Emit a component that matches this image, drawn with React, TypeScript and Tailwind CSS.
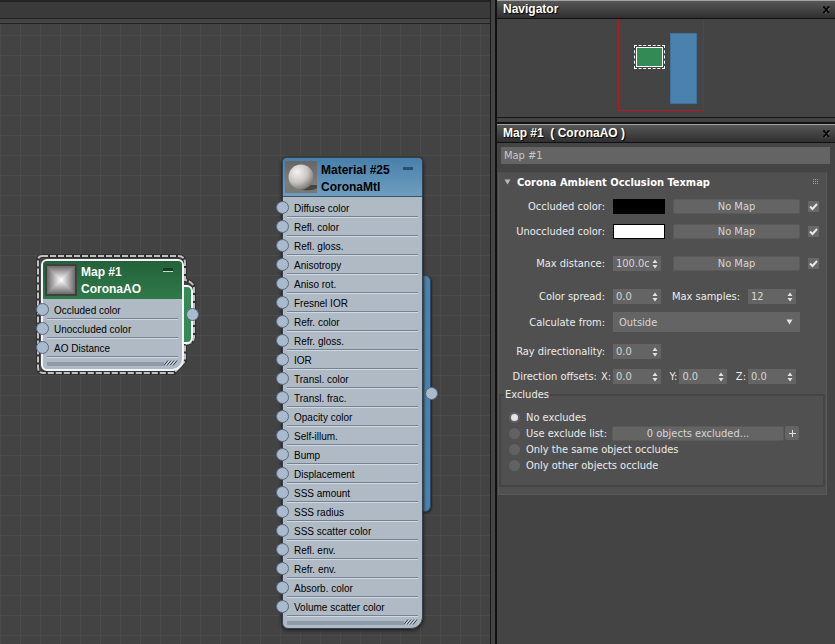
import { Fragment, useId } from "react";
import type { ReactNode } from "react";

const materialSlots = [
  "Diffuse color",
  "Refl. color",
  "Refl. gloss.",
  "Anisotropy",
  "Aniso rot.",
  "Fresnel IOR",
  "Refr. color",
  "Refr. gloss.",
  "IOR",
  "Transl. color",
  "Transl. frac.",
  "Opacity color",
  "Self-illum.",
  "Bump",
  "Displacement",
  "SSS amount",
  "SSS radius",
  "SSS scatter color",
  "Refl. env.",
  "Refr. env.",
  "Absorb. color",
  "Volume scatter color",
];

const aoSlots = ["Occluded color", "Unoccluded color", "AO Distance"];

function Port({ className }: { className: string }) {
  return (
    <span
      className={`absolute size-[13px] rounded-full border border-[#56687c] bg-[#a9bace] ${className}`}
    />
  );
}

function SlotList({ slots }: { slots: string[] }) {
  return (
    <ul>
      {slots.map((slot) => (
        <li key={slot} className="relative h-[19px] pr-1 pl-1">
          <Port className="top-1 -left-[7px]" />
          <div className="h-5 border-b border-[#76828f] pl-[7px] text-[10px] leading-6 shadow-[0_1px_0_#cdd9e4]">
            {slot}
          </div>
        </li>
      ))}
    </ul>
  );
}

function NodeFooter() {
  return (
    <div className="flex h-[13px] items-center px-1">
      <div className="mt-[2px] h-1 flex-1 bg-[#8e9bab]" />
      <svg width="14" height="6" viewBox="0 0 14 6" aria-hidden="true">
        <path d="M0 5.500 4 .5M3 5.500 7 .5M6 5.500 10 .5M9 5.500 13 .5" stroke="#303840" fill="none" />
        <path d="M1.500 5.500 5.500 .5M4.500 5.500 8.500 .5M7.500 5.500 11.500 .5" stroke="#e8eef4" strokeWidth=".7" fill="none" />
      </svg>
    </div>
  );
}

function SphereThumb() {
  return (
    <svg className="size-8 shrink-0" viewBox="0 0 32 32" aria-hidden="true">
      <defs>
        <linearGradient id="sphereBack" x1="0" y1="0" x2="0" y2="1">
          <stop offset="0" stopColor="#666666" />
          <stop offset=".65" stopColor="#7c7c7a" />
          <stop offset="1" stopColor="#777777" />
        </linearGradient>
        <radialGradient id="sphereFill" cx=".35" cy=".3" r=".75">
          <stop offset="0" stopColor="#f4f2ef" />
          <stop offset=".55" stopColor="#c9c6c2" />
          <stop offset="1" stopColor="#77726e" />
        </radialGradient>
      </defs>
      <rect width="32" height="32" fill="url(#sphereBack)" />
      <path d="M14 27C20 31 30 29 32 27V24L26 24Z" fill="#454545" />
      <circle cx="16" cy="16" r="12.500" fill="url(#sphereFill)" />
    </svg>
  );
}

function AoThumb() {
  return (
    <svg className="size-8 shrink-0" viewBox="0 0 32 32" aria-hidden="true">
      <defs>
        <linearGradient id="aoX">
          <stop offset="0" stopColor="#6c6868" />
          <stop offset=".5" stopColor="#ffffff" />
          <stop offset="1" stopColor="#6c6868" />
        </linearGradient>
        <linearGradient id="aoY" x1="0" y1="0" x2="0" y2="1">
          <stop offset="0" stopColor="#6c6868" />
          <stop offset=".5" stopColor="#ffffff" />
          <stop offset="1" stopColor="#6c6868" />
        </linearGradient>
      </defs>
      <rect width="32" height="32" fill="#3c4240" />
      <rect x="2" y="2" width="28" height="28" fill="url(#aoX)" />
      <path d="M2 2H30L16 16ZM2 30H30L16 16Z" fill="url(#aoY)" />
    </svg>
  );
}

function AoNode() {
  return (
    <section className="absolute top-[235px] left-[41px] w-[143px] text-black">
      <svg
        className="absolute -top-[6px] -left-[6px]"
        width="162"
        height="124"
        viewBox="0 0 162 124"
        fill="none"
        aria-hidden="true"
      >
        <path
          d="M7 3H143Q150 3 150 10V27Q159 29 159 36V84Q159 90 150 91V108L139 120H8Q3 120 3 114V8Q3 3 7 3Z"
          stroke="#303030"
          strokeWidth="4"
        />
        <path
          d="M7 3H143Q150 3 150 10V27Q159 29 159 36V84Q159 90 150 91V108L139 120H8Q3 120 3 114V8Q3 3 7 3Z"
          stroke="#c0c0c0"
          strokeWidth="2"
          strokeDasharray="6 2"
        />
      </svg>
      <div className="absolute top-[26px] -right-[9px] h-[59px] w-3 rounded-r-md border-2 border-white bg-[#348a55]" />
      <Port className="top-[49px] -right-[15px]" />
      <div className="relative rounded-md rounded-br-xl border-2 border-[#f2f5f8] bg-[#afbac5]">
        <header className="flex h-[38px] items-center gap-1 rounded-t bg-linear-to-b from-[#24613a] to-[#2f7a4a] pr-[3px] pl-[2px] text-white">
          <AoThumb />
          <h2 className="flex-1 pt-px text-xs leading-[17px] font-bold">
            Map #1
            <br />
            CoronaAO
          </h2>
          <button aria-label="Collapse Map #1" className="mr-[6px] mb-5 h-1 w-[10px] border-b border-[#c4dccb] bg-[#173e26]" />
        </header>
        <SlotList slots={aoSlots} />
        <NodeFooter />
      </div>
    </section>
  );
}

function MaterialNode() {
  return (
    <section className="absolute top-[133px] left-[282px] w-[141px] text-black">
      <div className="absolute top-[118px] -right-2 h-[237px] w-3 rounded-r-md border border-[#2c4a63] bg-[#4a82ad] shadow-[1px_1px_2px_#222]" />
      <Port className="top-[230px] -right-[15px]" />
      <div className="relative rounded-md rounded-br-xl border border-[#34414d] bg-[#afbac5] shadow-[0_1px_3px_1px_#252525]">
        <header className="flex h-[39px] items-center gap-1 rounded-t border-b border-[#3d566a] bg-linear-to-b from-[#4780aa] to-[#6f9dbf] pr-[3px] pl-[2px]">
          <SphereThumb />
          <h2 className="flex-1 pt-1 text-xs leading-[17px] font-bold whitespace-nowrap">
            Material #25
            <br />
            CoronaMtl
          </h2>
          <button aria-label="Collapse Material #25" className="mr-[6px] mb-[17px] h-[3px] w-[10px] bg-[#28506e]" />
        </header>
        <SlotList slots={materialSlots} />
        <NodeFooter />
      </div>
    </section>
  );
}

function PanelTitle({ children, name }: { children: ReactNode; name: string }) {
  return (
    <header className="flex h-[19px] items-center justify-between border-t border-b border-t-[#a0a5a2] border-b-[#111] bg-linear-to-b from-[#575757] to-[#303030] pr-1 pl-[6px]">
      <h2 className="pb-px font-['Liberation_Sans',Arial,sans-serif] text-xs leading-4 font-bold whitespace-pre text-white [text-shadow:1px_1px_1px_#000]">
        {children}
      </h2>
      <button aria-label={`Close ${name}`} className="size-[9px]">
        <svg width="9" height="9" viewBox="0 0 9 9" fill="none" aria-hidden="true">
          <path d="M2.500 3 7.500 8.500M7.500 3 2.500 8.500" stroke="#666" strokeWidth="1.500" />
          <path d="M2 2 6.500 7.500M6.500 2 2 7.500M1 2H3M5.500 2H7.500M1 7.500H3M5.500 7.500H7.500" stroke="#000" strokeWidth="1.600" />
        </svg>
      </button>
    </header>
  );
}

function Spinner({ label, value, id }: { label?: string; value: string; id: string }) {
  return (
    <div className="flex h-[15px] w-12 shrink-0 items-center bg-[#646464]">
      <input
        id={id}
        aria-label={label}
        defaultValue={value}
        className="h-[15px] w-9 min-w-0 bg-transparent pl-[3px] text-[11px] leading-[15px] text-[#d6d6d6] outline-none"
      />
      <svg className="ml-[3px]" width="6" height="10" viewBox="0 0 6 10" aria-hidden="true">
        <path d="M3 .5 5.500 4H.5ZM3 9.500 5.500 6H.5Z" fill="#e2e2e2" />
      </svg>
    </div>
  );
}

function MapButton() {
  return (
    <button className="h-[15px] flex-1 rounded-xs border border-[#5a5a5a] bg-[#646464] text-[11px] leading-[13px] text-[#d6d6d6]">
      No Map
    </button>
  );
}

function MapToggle({ label }: { label: string }) {
  return (
    <span className="grid size-[11px] shrink-0 items-center">
      <input
        type="checkbox"
        defaultChecked
        aria-label={label}
        className="peer col-start-1 row-start-1 size-[11px] appearance-none bg-[#686868]"
      />
      <svg
        className="pointer-events-none invisible col-start-1 row-start-1 peer-checked:visible"
        width="11"
        height="11"
        viewBox="0 0 11 11"
        fill="none"
        aria-hidden="true"
      >
        <path d="M2 5.500 4.500 8 9 3" stroke="#e8e8e8" strokeWidth="2" />
      </svg>
    </span>
  );
}

const rowLabel = "w-[106px] shrink-0 text-right whitespace-nowrap";

function Row({ children }: { children: ReactNode }) {
  return <div className="flex items-center gap-2 pr-[7px]">{children}</div>;
}

function Excludes() {
  const name = useId();
  const options = [
    "No excludes",
    "Use exclude list:",
    "Only the same object occludes",
    "Only other objects occlude",
  ];
  return (
    <fieldset className="mr-px mt-1 border-2 border-[#444] pr-6 pb-3 pl-2">
      <legend className="-ml-[5px] h-[14px] px-px leading-[14px]">Excludes</legend>
      <div className="flex flex-col pt-[7px]">
        {options.map((option, index) => (
          <div key={option} className="flex h-4 items-center">
            <label className="flex items-center gap-[6px] whitespace-nowrap">
              <input
                type="radio"
                name={name}
                defaultChecked={index === 0}
                className="size-[11px] appearance-none rounded-full border-2 border-[#626262] bg-[#626262] checked:bg-[#e4e4e4]"
              />
              {option}
            </label>
            {index === 1 && (
              <Fragment>
                <button className="ml-auto h-[15px] w-[172px] rounded-xs border border-[#5a5a5a] bg-[#646464] leading-[13px] text-[#d6d6d6]">
                  0 objects excluded...
                </button>
                <button
                  aria-label="Add excluded object"
                  className="ml-px grid size-[14px] place-items-center rounded-xs bg-[#646464] text-[#e0e0e0]"
                >
                  <svg width="7" height="7" viewBox="0 0 7 7" aria-hidden="true">
                    <path d="M3 0h1v3h3v1H4v3H3V4H0V3h3Z" fill="currentColor" />
                  </svg>
                </button>
              </Fragment>
            )}
          </div>
        ))}
      </div>
    </fieldset>
  );
}

function Rollout() {
  return (
    <section className="mt-2 mr-2 ml-px border border-[#5a5a5a] border-t-[#4c4c4c] bg-[#505050] pb-[7px] text-[11px] leading-[15px] text-[#ececec]">
      <header className="flex h-[18px] items-center pr-[7px] pl-[5px]">
        <svg width="7" height="6" viewBox="0 0 7 6" aria-hidden="true">
          <path d="M.5 .5H6.500L3.500 5.500Z" fill="#b8b8b8" />
        </svg>
        <h3 className="ml-[6px] flex-1 font-bold text-white">Corona Ambient Occlusion Texmap</h3>
        <svg width="6" height="6" viewBox="0 0 6 6" aria-hidden="true">
          <path
            d="M0 0h1v1H0ZM2 0h1v1H2ZM4 0h1v1H4ZM0 2h1v1H0ZM2 2h1v1H2ZM4 2h1v1H4ZM0 4h1v1H0ZM2 4h1v1H2ZM4 4h1v1H4Z"
            fill="#a0a0a0"
          />
        </svg>
      </header>
      <div className="flex flex-col pt-2">
        <Row>
          <label htmlFor="occluded" className={rowLabel}>Occluded color:</label>
          <button id="occluded" className="h-[15px] w-[52px] border border-black bg-black" />
          <MapButton />
          <MapToggle label="Use occluded map" />
        </Row>
        <div className="mt-[10px]">
          <Row>
            <label htmlFor="unoccluded" className={rowLabel}>Unoccluded color:</label>
            <button id="unoccluded" className="h-[15px] w-[52px] border border-black bg-white" />
            <MapButton />
            <MapToggle label="Use unoccluded map" />
          </Row>
        </div>
        <div className="mt-[17px]">
          <Row>
            <label htmlFor="distance" className={rowLabel}>Max distance:</label>
            <div className="w-[52px]">
              <Spinner id="distance" value="100.0cm" />
            </div>
            <MapButton />
            <MapToggle label="Use distance map" />
          </Row>
        </div>
        <div className="mt-[18px]">
          <Row>
            <label htmlFor="spread" className={rowLabel}>Color spread:</label>
            <Spinner id="spread" value="0.0" />
            <div className="ml-auto flex gap-2 pr-[23px]">
              <label htmlFor="samples">Max samples:</label>
              <Spinner id="samples" value="12" />
            </div>
          </Row>
        </div>
        <div className="mt-2">
          <Row>
            <label htmlFor="calculate" className={rowLabel}>Calculate from:</label>
            <div className="mr-[19px] grid h-5 flex-1 items-center bg-[#646464]">
              <select
                id="calculate"
                className="col-start-1 row-start-1 h-5 w-full appearance-none bg-transparent pl-[6px] text-[#d6d6d6] outline-none"
              >
                <option>Outside</option>
              </select>
              <svg
                className="pointer-events-none col-start-1 row-start-1 mr-[7px] justify-self-end"
                width="7"
                height="6"
                viewBox="0 0 7 6"
                aria-hidden="true"
              >
                <path d="M.5 .5H6.500L3.500 5.500Z" fill="#e2e2e2" />
              </svg>
            </div>
          </Row>
        </div>
        <div className="mt-3">
          <Row>
            <label htmlFor="ray" className={rowLabel}>Ray directionality:</label>
            <Spinner id="ray" value="0.0" />
          </Row>
        </div>
        <div className="mt-[10px] flex items-center justify-between pr-[30px]">
          <div className="flex w-[162px] items-center justify-end gap-[2px] whitespace-nowrap">
            <span className="mr-[2px]">Direction offsets:</span>
            <label htmlFor="offsetX">X:</label>
            <Spinner id="offsetX" value="0.0" />
          </div>
          <div className="flex items-center gap-[2px]">
            <label htmlFor="offsetY">Y:</label>
            <Spinner id="offsetY" value="0.0" />
          </div>
          <div className="flex items-center gap-[2px]">
            <label htmlFor="offsetZ">Z:</label>
            <Spinner id="offsetZ" value="0.0" />
          </div>
        </div>
      </div>
      <Excludes />
    </section>
  );
}

function Navigator() {
  return (
    <section>
      <PanelTitle name="Navigator">Navigator</PanelTitle>
      <div className="h-[99px] border-b border-[#161616] pr-[10px]">
        <div className="relative mx-auto h-[92px] w-[86px] border-x border-b border-[#b01c22]">
          <div className="absolute top-[26px] left-[15px] h-6 w-[31px] border border-dashed border-white p-px">
            <div className="h-full border border-white bg-[#348a55]" />
          </div>
          <div className="absolute top-[14px] left-[51px] h-[71px] w-[27px] border border-[#3f719a] bg-[#4a82ad]" />
        </div>
      </div>
    </section>
  );
}

export default function App() {
  return (
    <main className="flex min-h-screen bg-[#444] font-['DejaVu_Sans_Condensed','DejaVu_Sans',sans-serif]">
      <div className="flex min-w-0 flex-1 flex-col border-r border-[#181818] font-['Liberation_Sans',Arial,sans-serif]">
        <div className="h-[19px] border-t-2 border-b border-t-[#222] border-b-[#222] bg-[#3a3a3a]" />
        <div className="h-[5px] border-b border-[#222]" />
        <div className="relative flex-1 overflow-hidden bg-[#434343] bg-[linear-gradient(#4b4b4b_1px,transparent_1px),linear-gradient(90deg,#4b4b4b_1px,transparent_1px)] bg-[size:20px_20px] bg-[position:0_11px]">
          <AoNode />
          <MaterialNode />
        </div>
      </div>
      <aside className="ml-1 flex w-[340px] shrink-0 flex-col border-l-2 border-[#111]">
        <Navigator />
        <div className="mt-1 border-t-2 border-[#111]">
          <PanelTitle name="Map #1">{"Map #1  ( CoronaAO )"}</PanelTitle>
        </div>
        <div className="pt-1 pr-[5px] pl-1">
          <input
            aria-label="Map name"
            defaultValue="Map #1"
            className="block h-[17px] w-full bg-[#646464] pl-[3px] text-[11px] leading-[15px] text-[#c8c8c8] outline-none"
          />
        </div>
        <Rollout />
      </aside>
    </main>
  );
}
